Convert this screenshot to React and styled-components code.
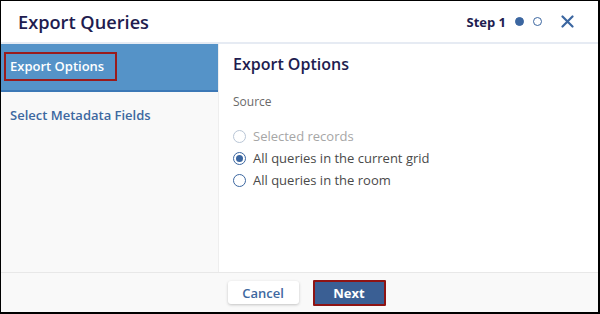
import React, { useState } from "react";
import styled, { createGlobalStyle } from "styled-components";

const GlobalStyle = createGlobalStyle`
  html, body {
    margin: 0;
    padding: 0;
    background: #ffffff;
  }
  body {
    font-family: "Open Sans", "Noto Sans", sans-serif;
  }
`;

const Frame = styled.div`
  box-sizing: border-box;
  width: 600px;
  height: 314px;
  border: 1px solid #000;
  border-right-width: 2px;
  border-bottom-width: 2px;
  display: flex;
  flex-direction: column;
  background: #fff;
  overflow: hidden;
`;

const Header = styled.div`
  height: 41px;
  flex-shrink: 0;
  display: flex;
  align-items: center;
  padding: 0 24px 0 17px;
  border-bottom: 2px solid #e6ebf3;
`;

const Title = styled.h1`
  margin: 0;
  font-size: 18.2px;
  font-weight: 600;
  color: #211c4f;
  flex: 1;
`;

const StepLabel = styled.span`
  font-size: 13px;
  font-weight: 700;
  color: #211c4f;
  margin-right: 9px;
`;

const Dot = styled.span`
  width: 9px;
  height: 9px;
  box-sizing: border-box;
  border-radius: 50%;
  margin-right: 9px;
  border: 1.5px solid #3b66a0;
  background: ${(p) => (p.$filled ? "#3b66a0" : "#fff")};
`;

const CloseButton = styled.button`
  margin-left: 10px;
  background: none;
  border: none;
  padding: 0;
  display: flex;
  cursor: pointer;
`;

const Body = styled.div`
  flex: 1;
  display: flex;
  min-height: 0;
`;

const Sidebar = styled.nav`
  width: 217px;
  background: #f9f9f9;
  border-right: 1px solid #eeeeee;
  display: flex;
  flex-direction: column;
`;

const NavItem = styled.div`
  height: 46px;
  display: flex;
  align-items: center;
  padding-left: 3px;
  background: ${(p) => (p.$active ? "#5593c8" : "transparent")};
  border-bottom: 2px solid ${(p) => (p.$active ? "#3c78b6" : "transparent")};
`;

const NavLabel = styled.span`
  font-size: 13px;
  font-weight: 600;
  color: ${(p) => (p.$active ? "#ffffff" : "#3d68a0")};
  padding: ${(p) => (p.$active ? "3px 11px 4px 4px" : "4px 4px")};
  border: 2px solid ${(p) => (p.$active ? "#9a1b1b" : "transparent")};
  margin-top: ${(p) => (p.$active ? "-1px" : "0")};
`;

const Content = styled.main`
  flex: 1;
  padding: 9px 14px;
`;

const SectionTitle = styled.h2`
  margin: 0;
  font-size: 16px;
  font-weight: 600;
  color: #211c4f;
`;

const FieldLabel = styled.div`
  margin-top: 18px;
  font-size: 12px;
  color: #6a6a6a;
`;

const RadioList = styled.div`
  margin-top: 17px;
  display: flex;
  flex-direction: column;
  gap: 4px;
`;

const RadioRow = styled.label`
  display: flex;
  align-items: center;
  height: 18px;
  font-size: 13px;
  color: ${(p) => (p.$disabled ? "#a6a6a6" : "#4a4a4a")};
  cursor: ${(p) => (p.$disabled ? "default" : "pointer")};
`;

const RadioCircle = styled.span`
  box-sizing: border-box;
  width: 13px;
  height: 13px;
  border-radius: 50%;
  border: 1px solid ${(p) => (p.$disabled ? "#b9c6d6" : "#3b66a0")};
  margin-right: 7px;
  display: flex;
  align-items: center;
  justify-content: center;
  background: #fff;

  &::after {
    content: "";
    width: 7px;
    height: 7px;
    border-radius: 50%;
    background: ${(p) => (p.$checked ? "#3b66a0" : "transparent")};
  }
`;

const Footer = styled.div`
  height: 39px;
  flex-shrink: 0;
  background: #f9f9f9;
  border-top: 1px solid #e8e8e8;
  display: flex;
  align-items: center;
  justify-content: center;
  gap: 14px;
  padding-left: 14px;
`;

const Button = styled.button`
  box-sizing: border-box;
  font-family: inherit;
  font-size: 13px;
  font-weight: ${(p) => (p.$primary ? 700 : 600)};
  height: ${(p) => (p.$primary ? "26px" : "23px")};
  width: ${(p) => (p.$primary ? "73px" : "71px")};
  cursor: pointer;
  color: ${(p) => (p.$primary ? "#ffffff" : "#3d68a0")};
  background: ${(p) => (p.$primary ? "#3a5f94" : "#ffffff")};
  border: ${(p) => (p.$primary ? "2px solid #8e1414" : "none")};
  border-radius: ${(p) => (p.$primary ? "1px" : "3px")};
  box-shadow: ${(p) => (p.$primary ? "none" : "0 1px 3px rgba(0,0,0,0.22)")};
`;

const options = [
  { id: "selected", label: "Selected records", disabled: true },
  { id: "grid", label: "All queries in the current grid" },
  { id: "room", label: "All queries in the room" },
];

export default function App() {
  const [source, setSource] = useState("grid");

  return (
    <>
      <GlobalStyle />
      <Frame>
        <Header>
          <Title>Export Queries</Title>
          <StepLabel>Step 1</StepLabel>
          <Dot $filled />
          <Dot />
          <CloseButton aria-label="Close">
            <svg width="13" height="13" viewBox="0 0 13 13">
              <path
                d="M1.5 1.5 L11.5 11.5 M11.5 1.5 L1.5 11.5"
                stroke="#3b66a0"
                strokeWidth="2.2"
                strokeLinecap="round"
              />
            </svg>
          </CloseButton>
        </Header>
        <Body>
          <Sidebar>
            <NavItem $active>
              <NavLabel $active>Export Options</NavLabel>
            </NavItem>
            <NavItem>
              <NavLabel>Select Metadata Fields</NavLabel>
            </NavItem>
          </Sidebar>
          <Content>
            <SectionTitle>Export Options</SectionTitle>
            <FieldLabel>Source</FieldLabel>
            <RadioList>
              {options.map((o) => (
                <RadioRow
                  key={o.id}
                  $disabled={o.disabled}
                  onClick={() => !o.disabled && setSource(o.id)}
                >
                  <RadioCircle
                    $disabled={o.disabled}
                    $checked={source === o.id}
                  />
                  {o.label}
                </RadioRow>
              ))}
            </RadioList>
          </Content>
        </Body>
        <Footer>
          <Button>Cancel</Button>
          <Button $primary>Next</Button>
        </Footer>
      </Frame>
    </>
  );
}
